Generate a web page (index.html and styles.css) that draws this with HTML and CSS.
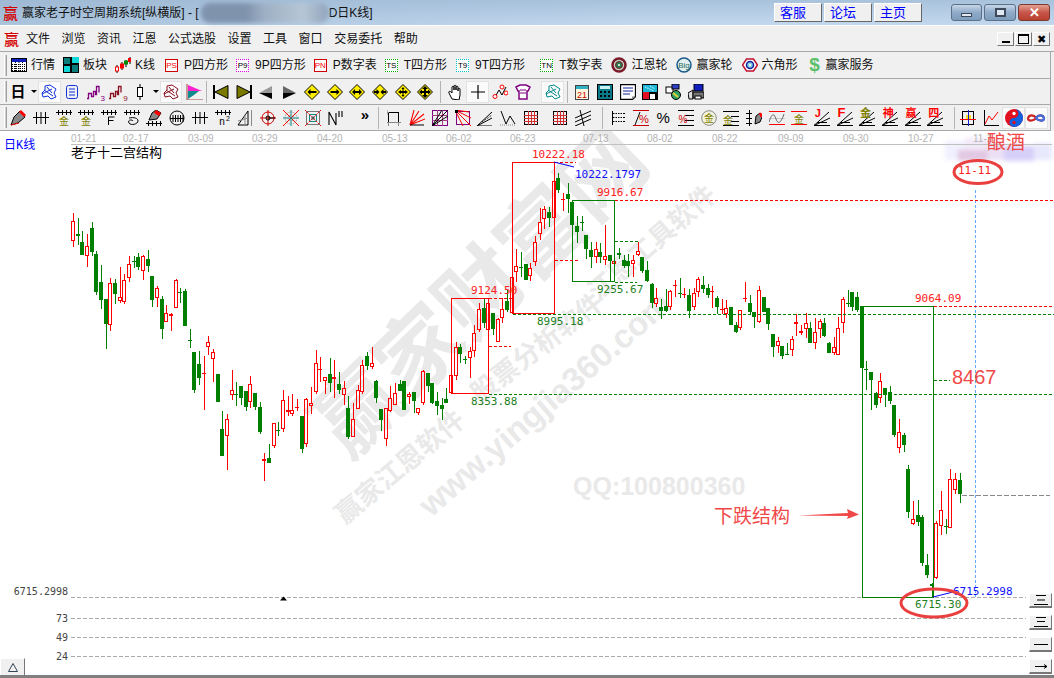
FILE: index.html
```html
<!DOCTYPE html>
<html lang="zh-CN">
<head>
<meta charset="utf-8">
<title>赢家老子时空周期系统</title>
<link rel="stylesheet" href="styles.css">
</head>
<body>
<svg class="sprite" aria-hidden="true">
  <symbol id="table" viewBox="0 0 16 16"><rect x=".5" y="1.5" width="15" height="13" fill="#fff" stroke="#000"/><rect x="1" y="2" width="14" height="3" fill="#1020c0"/><path d="M1 7.5h14M1 9.5h14M1 11.5h14M1 13.5h14M4.5 5v9M8 5v9M11.5 5v9" stroke="#000" stroke-dasharray="1 1"/></symbol>
  <symbol id="blocks" viewBox="0 0 16 16"><rect width="16" height="16" fill="#000"/><rect x="1" y="1" width="6" height="6" fill="#0a7c7c"/><rect x="9" y="0" width="7" height="6" fill="#10d8d8"/><rect x="1" y="9" width="6" height="6" fill="#10d8d8"/><rect x="9" y="8" width="6" height="7" fill="#0a7c7c"/></symbol>
  <symbol id="kline" viewBox="0 0 16 16"><path d="M2 8v8M7 5v8M11 3v7M15 0v7" stroke="#000"/><rect x="0.5" y="10" width="3" height="4" fill="#fff" stroke="red"/><rect x="5.500" y="7" width="3" height="4" fill="red" stroke="red"/><rect x="9.500" y="4" width="3" height="3" fill="#080" stroke="#080"/><rect x="13" y="1" width="3" height="4" fill="red"/></symbol>
  <symbol id="gann" viewBox="0 0 16 16"><circle cx="8" cy="8" r="6.500" fill="#c8d8c8" stroke="#7a1a2a" stroke-width="2.500"/><circle cx="8" cy="8" r="3.500" fill="#2a7a4a" stroke="#7a1a2a"/><circle cx="8" cy="8" r="1" fill="#fff"/></symbol>
  <symbol id="big" viewBox="0 0 16 16"><circle cx="8" cy="8" r="7" fill="#e4f0f0" stroke="#1a5a8a" stroke-width="1.500"/><text x="8" y="11" text-anchor="middle" class="svt" font-size="8" fill="#1a6a5a">Big</text></symbol>
  <symbol id="hex" viewBox="0 0 16 16"><path d="M4.500 2h7L15.500 8l-4 6h-7L.5 8z" fill="#fff" stroke="#c01030" stroke-width="1.500"/><circle cx="8" cy="8" r="3.500" fill="#8ad0e0" stroke="#1020a0" stroke-width="1.500"/><circle cx="8" cy="8" r="1" fill="#fff"/></symbol>
  <symbol id="scribble" viewBox="0 0 16 16"><path d="M4 2l5-1 6 4-2 4 2 4-5 2-3-3-5 1-1-4 3-3zM3 6l9 6M6 3l5 6M1 10l10-5" fill="none" stroke="currentColor"/></symbol>
  <symbol id="doc" viewBox="0 0 16 16"><rect x="2.500" y="1.500" width="11" height="13" rx="2" fill="none" stroke="#1030e0"/><path d="M5 5h6M5 8h6M5 11h6" stroke="#1030e0"/></symbol>
  <symbol id="stairs" viewBox="0 0 16 16"><path d="M0 14.500h1.500v-5h3v3h2v-5h2v3h1V2.500h2.500v6" fill="none" stroke="currentColor" stroke-width="1.300"/></symbol>
  <symbol id="candle" viewBox="0 0 16 16"><path d="M8 0v16" stroke="#000"/><rect x="5.500" y="3.500" width="5" height="9" fill="#fff" stroke="#000"/></symbol>
  <symbol id="flag" viewBox="0 0 18 16"><path d="M2 0v16h16" fill="none" stroke="#a04040"/><path d="M3 1l14 6H3z" fill="#ff20d0"/><path d="M3 7h11L9 11H3z" fill="#108a8a"/><path d="M3 11h6L3 15z" fill="#108a8a"/></symbol>
  <symbol id="first" viewBox="0 0 16 16"><rect x="0" y="1" width="2" height="14" fill="#000"/><path d="M2 8L15 1.500v13z" fill="#7a7a00" stroke="#000"/></symbol>
  <symbol id="last" viewBox="0 0 16 16"><rect x="14" y="1" width="2" height="14" fill="#000"/><path d="M14 8L1 1.500v13z" fill="#7a7a00" stroke="#000"/></symbol>
  <symbol id="prev" viewBox="0 0 16 16"><path d="M1 9l13-7v7z" fill="#999"/><path d="M1 9h13v6z" fill="#000"/></symbol>
  <symbol id="next" viewBox="0 0 16 16"><path d="M15 9L2 2v7z" fill="#666"/><path d="M15 9H2v6z" fill="#000"/></symbol>
  <symbol id="dia" viewBox="0 0 16 16"><path d="M8 .5L15.500 8 8 15.500.5 8z" fill="#ffee00" stroke="#000"/></symbol>
  <symbol id="d-l" viewBox="0 0 16 16"><use href="#dia"/><path d="M3.500 8l3-3v2h6v2h-6v2z" fill="#000"/></symbol>
  <symbol id="d-r" viewBox="0 0 16 16"><use href="#dia"/><path d="M12.500 8l-3-3v2h-6v2h6v2z" fill="#000"/></symbol>
  <symbol id="d-lr" viewBox="0 0 16 16"><use href="#dia"/><path d="M3 8l3-3v2h4V5l3 3-3 3V9H6v2z" fill="#000"/></symbol>
  <symbol id="d-in" viewBox="0 0 16 16"><use href="#dia"/><path d="M7.500 8l-3-3v2H2v2h2.500v2zM8.500 8l3-3v2H14v2h-2.500v2z" fill="#000"/></symbol>
  <symbol id="d-ud" viewBox="0 0 16 16"><use href="#dia"/><path d="M3 8l3-2v1h1.500V5H6.500L8 3l1.500 2h-1v2H10V6l3 2-3 2V9H8.500v2h1L8 13l-1.500-2h1V9H6v1z" fill="#000"/></symbol>
  <symbol id="d-uu" viewBox="0 0 16 16"><use href="#dia"/><path d="M8 2l3 3H9v2h2V5.500L14 8l-3 2.500V9H9v2h2l-3 3-3-3h2V9H5v1.500L2 8l3-2.500V7h2V5H5z" fill="#000"/></symbol>
  <symbol id="hand" viewBox="0 0 16 16"><path d="M5 15L2 9c-1-2 1-2 2-1l1 1V3c0-1 2-1 2 0v3-4c0-1 2-1 2 0v4-3c0-1 2-1 2 0v4-2c0-1 2-1 2 0v6l-1 5z" fill="#fff" stroke="#000"/></symbol>
  <symbol id="cross" viewBox="0 0 16 16"><path d="M8 1v14M1 8h14" stroke="#000" stroke-width="1.200"/></symbol>
  <symbol id="nodes" viewBox="0 0 16 16"><path d="M3 13L7 6l3 5 4-8" fill="none" stroke="#000"/><circle cx="3" cy="12.500" r="2" fill="#fff" stroke="red"/><circle cx="10" cy="3" r="2" fill="#fff" stroke="red"/><circle cx="14" cy="9" r="2" fill="#fff" stroke="red"/></symbol>
  <symbol id="shirt" viewBox="0 0 16 16"><path d="M1 3l4-2h6l4 2-2 4h-1v8H4V7H3z" fill="#fff" stroke="#800080" stroke-width="1.500"/><path d="M5 6h6M5 9h6" stroke="#800080"/></symbol>
  <symbol id="cal" viewBox="0 0 16 16"><rect x="1.500" y="1.500" width="13" height="14" fill="#fff8e0" stroke="#444"/><rect x="2" y="2" width="12" height="3" fill="#30b0c0"/><text x="8" y="14" text-anchor="middle" class="svt" font-size="9" fill="#d00000">21</text></symbol>
  <symbol id="calc" viewBox="0 0 16 16"><rect x=".5" y=".5" width="15" height="15" fill="#0a7a8a" stroke="#000"/><rect x="3" y="2" width="10" height="3" fill="#c8f0f0"/><path d="M3 7h2v2H3zM7 7h2v2H7zM11 7h2v2h-2zM3 11h2v2H3zM7 11h2v2H7zM11 11h2v2h-2z" fill="#000"/></symbol>
  <symbol id="note" viewBox="0 0 16 16"><path d="M.5.5h15v12l-3 3h-12z" fill="#fff" stroke="#000" stroke-width="1.300"/><path d="M3 4h10M3 7h10M3 10h7" stroke="#1020a0"/><path d="M12 15.500v-3h3.500z" fill="#888"/></symbol>
  <symbol id="disk" viewBox="0 0 16 16"><rect width="16" height="16" fill="#000"/><rect x="1" y="1" width="14" height="7" fill="#20b8d8"/><rect x="1" y="8" width="6" height="7" fill="#e01020"/><rect x="8" y="10" width="5" height="5" fill="#fff"/><path d="M3 3l9 4M8 2l5 3" stroke="#fff" stroke-dasharray="1 1"/></symbol>
  <symbol id="net" viewBox="0 0 16 16"><rect x="1" y="3" width="7" height="6" fill="#fff" stroke="#000"/><rect x="7" y="0" width="7" height="5" fill="#3040c0" stroke="#000"/><circle cx="11" cy="11" r="4.500" fill="#30a060" stroke="#000"/><path d="M8 9l5 4" stroke="#e0d040" stroke-width="2"/></symbol>
  <symbol id="print" viewBox="0 0 16 16"><rect x="6" y="0" width="9" height="7" fill="#1020c0" stroke="#000"/><path d="M0 9l5-3v9H1z" fill="#ddd" stroke="#000"/><rect x="5" y="8" width="11" height="6" fill="#777" stroke="#000"/><rect x="7" y="12" width="6" height="3" fill="#fff" stroke="#000"/></symbol>

  <symbol id="pen" viewBox="0 0 16 16"><path d="M1 15l3-8 6-6 5 6-7 6z" fill="#888" stroke="#000"/><path d="M9 2l2-2 5 5-2 2z" fill="red"/><path d="M1 15l8-2" stroke="red"/></symbol>
  <symbol id="comb3" viewBox="0 0 16 16"><path d="M0 7.500h16M3.500 2v12M8 2v12M12.500 2v12" stroke="#000"/></symbol>
  <symbol id="comb" viewBox="0 0 16 16"><path d="M0 2.500h16M2.500 0v5M6.500 0v5M10.500 0v5M14.500 0v5" stroke="#000"/></symbol>
  <symbol id="gold" viewBox="0 0 16 16"><use href="#comb"/><text x="8" y="15" text-anchor="middle" class="svt" font-size="10" fill="#808000">金</text></symbol>
  <symbol id="combf" viewBox="0 0 16 16"><use href="#comb"/><path d="M7.500 15V7h6M7.500 10.500h5" fill="none" stroke="#000"/></symbol>
  <symbol id="spiral" viewBox="0 0 16 16"><use href="#comb"/><path d="M5 8c5-1 9 0 9 3s-7 5-9 2 3-4 4-2" fill="none" stroke="#000"/></symbol>
  <symbol id="pencomb" viewBox="0 0 16 16"><path d="M3 10l3-7 4-3 5 3-4 6z" fill="#888" stroke="#000"/><path d="M10 0l5 3-2 3-5-3z" fill="red"/><path d="M0 13.500h16M2.500 11v5M6.500 11v5M10.500 11v5M14.500 11v5" stroke="#000"/></symbol>
  <symbol id="circomb" viewBox="0 0 16 16"><circle cx="8" cy="8" r="7" fill="none" stroke="#000"/><path d="M1 8.500h14M4 5v7M6.500 5v7M9 5v7M11.500 5v7M14 5v7" stroke="#000"/></symbol>
  <symbol id="n2" viewBox="0 0 16 16"><use href="#comb"/><text x="7" y="15" text-anchor="middle" class="svt" font-size="10" fill="#000">n</text><text x="13" y="11" text-anchor="middle" class="svt" font-size="7" fill="#000">2</text></symbol>
  <symbol id="tri" viewBox="0 0 16 16"><path d="M1 15L11 1v14z" fill="none" stroke="#000"/><path d="M8 4v12M14.500 0v16M1 11l10-3" stroke="#888"/></symbol>
  <symbol id="target" viewBox="0 0 16 16"><circle cx="8" cy="8" r="6" fill="none" stroke="#c00"/><path d="M8 0v16M0 8h16" stroke="#c00"/><path d="M8 8h7" stroke="#000"/><circle cx="8" cy="8" r="2" fill="none" stroke="#000"/></symbol>
  <symbol id="web" viewBox="0 0 16 16"><path d="M0 0l16 16M16 0L0 16" stroke="red"/><path d="M8 0v16M0 8h16" stroke="#0a8a8a"/><circle cx="8" cy="8" r="6" fill="none" stroke="#888" stroke-dasharray="1 1"/><circle cx="8" cy="8" r="3" fill="none" stroke="#888" stroke-dasharray="1 1"/></symbol>
  <symbol id="sqweb" viewBox="0 0 16 16"><rect x="1.500" y="1.500" width="13" height="13" fill="none" stroke="#777"/><rect x="4.500" y="4.500" width="7" height="7" fill="none" stroke="#0a8a8a"/><path d="M0 0l16 16M16 0L0 16" stroke="red" stroke-dasharray="2 1"/><rect x="6.500" y="6.500" width="3" height="3" fill="#555"/></symbol>
  <symbol id="nn" viewBox="0 0 16 16"><path d="M1 15V2l7 13V3M11 1v6M14 1v6" fill="none" stroke="#000" stroke-width="1.100"/></symbol>
  <symbol id="gsq" viewBox="0 0 16 16"><rect x="1.500" y="2.500" width="10" height="10" fill="none" stroke="#000"/><path d="M0 2.500h2M0 12.500h14M1.500 12v4M11.500 12v4M0 0v5" stroke="#888"/></symbol>
  <symbol id="rfan" viewBox="0 0 16 16"><path d="M1 15L5 0M1 15L10 1M1 15L15 4M1 15L16 9" stroke="red" stroke-width="1.100"/><path d="M1 15h14" stroke="#000"/></symbol>
  <symbol id="gridp" viewBox="0 0 16 16"><rect x=".5" y=".5" width="15" height="15" fill="none" stroke="#800080"/><path d="M0 5.500h16M0 10.500h16M5.500 0v16M10.500 0v16" stroke="#a04080"/><path d="M0 16L16 0M0 16L16 6M0 16L10 0" stroke="#000"/></symbol>
  <symbol id="boxfan" viewBox="0 0 16 16"><rect x="1.500" y="1.500" width="13" height="13" fill="none" stroke="#800080"/><path d="M0 0l16 16M0 0l16 8M0 0l8 16M0 0l14 2" stroke="red"/><rect x="0" y="0" width="3" height="3" fill="#000"/></symbol>
  <symbol id="kfan" viewBox="0 0 16 16"><path d="M0 16L15 2M0 16L15 8M0 16h15" stroke="#000"/><path d="M5 12L15 5" stroke="#000" stroke-dasharray="1 1"/></symbol>
  <symbol id="vv" viewBox="0 0 16 16"><path d="M1 1l5 13 4-8 5 8" fill="none" stroke="#000"/><path d="M0 15h16" stroke="#888" stroke-dasharray="1 1"/></symbol>
  <symbol id="gridr" viewBox="0 0 16 16"><rect x="1.500" y="1.500" width="13" height="13" fill="none" stroke="#000"/><path d="M1 5.500h14M1 8.500h14M1 11.500h14M5.500 1v14M8.500 1v14M11.500 1v14" stroke="#d03030"/></symbol>
  <symbol id="para" viewBox="0 0 16 16"><path d="M0 8L16 1M0 12L16 5M0 16L16 9M5 0l4 16" stroke="#000"/></symbol>
  <symbol id="elines" viewBox="0 0 16 16"><path d="M2.500 1v14M2 3.500h13M2 7.500h13M2 11.500h13" stroke="#000"/><path d="M5 1v14M7.500 1v14M10 1v14M12.500 1v14" stroke="#fff" stroke-dasharray="1 1"/></symbol>
  <symbol id="pct1" viewBox="0 0 16 16"><path d="M0 .5h16M0 15.500h16" stroke="#c00"/><path d="M2 15L7 2" stroke="#000"/><text x="11" y="13" text-anchor="middle" class="svt" font-size="11" fill="#c00">%</text></symbol>
  <symbol id="pct3" viewBox="0 0 16 16"><path d="M0 .5h16M7 5.500h9M7 10.500h9M0 15.500h16" stroke="#000"/><text x="5" y="13" text-anchor="middle" class="svt" font-size="10" fill="#c00">%</text></symbol>
  <symbol id="goldc" viewBox="0 0 16 16"><circle cx="8" cy="8" r="7.300" fill="#f4f4dc" stroke="#888"/><text x="8" y="12" text-anchor="middle" class="svt" font-size="10" fill="#808000">金</text></symbol>
  <symbol id="goldl" viewBox="0 0 16 16"><path d="M0 1.500h16M8 6.500h8M8 11.500h8M0 15.500h16" stroke="#000"/><text x="5" y="14" text-anchor="middle" class="svt" font-size="10" fill="#808000">金</text></symbol>
  <symbol id="penl" viewBox="0 0 16 16"><path d="M9 14l1-8 4-3 2 4-2 5z" fill="#888" stroke="#000"/><path d="M14 3l2 4" stroke="red" stroke-width="2.500"/><path d="M3.500 0v16M0 3.500h6M0 8.500h6M0 13.500h6" stroke="#000"/></symbol>
  <symbol id="sine" viewBox="0 0 16 16"><path d="M0 1.500h16M0 14.500h16" stroke="red"/><path d="M0 8.500h16" stroke="#ccc"/><path d="M0 12c3-9 5-9 7-3s5 4 8-5" fill="none" stroke="#666"/></symbol>
  <symbol id="goldr" viewBox="0 0 16 16"><path d="M0 1.500h16M0 14.500h16" stroke="red"/><text x="8" y="12.500" text-anchor="middle" class="svt" font-size="10" fill="#808000">金</text></symbol>
  <symbol id="fan" viewBox="0 0 16 16"><path d="M0 15.500L15 2M0 15.500L16 8M0 15.500h16" stroke="#000"/><path d="M3 12.500h10" stroke="#000"/></symbol>
  <symbol id="gridy" viewBox="0 0 16 16"><rect x="2.500" y="1.500" width="11" height="13" fill="none" stroke="#000"/><rect x="6" y="5" width="5" height="5" fill="#ffe020"/><path d="M0 9.500h16" stroke="red"/><path d="M8.500 0v16" stroke="#1020d0"/></symbol>
  <symbol id="chart2" viewBox="0 0 16 16"><path d="M1.500 0v15.500H16" fill="none" stroke="#000"/><path d="M2 14l4-8 3 4 6-8" fill="none" stroke="red"/></symbol>
  <symbol id="yin" viewBox="0 0 16 16"><circle cx="8" cy="8" r="8" fill="#e01020"/><path d="M8 0a8 8 0 0 1 0 16 4 4 0 0 1 0-8 4 4 0 0 0 0-8z" fill="#1060e0"/><circle cx="8" cy="4" r="1.500" fill="#fff"/><circle cx="8" cy="12" r="1.500" fill="#e01020"/></symbol>
  <symbol id="inf" viewBox="0 0 16 16"><path d="M8 8c-2-3-6-3-7 0s5 3 7 0 6-3 7 0-5 3-7 0z" fill="none" stroke="#d02020" stroke-width="2"/><path d="M8 8c2-3 6-3 7 0s-5 3-7 0z" fill="none" stroke="#4070e0" stroke-width="2"/></symbol>
</svg>

<div class="app">
  <header class="title">
    <span class="logo">赢</span>
    <span class="title-text">赢家老子时空周期系统[纵横版] - [</span>
    <span class="blur"></span>
    <span class="title-text">D日K线]</span>
    <span class="spring"></span>
    <a class="link">客服</a><a class="link">论坛</a><a class="link">主页</a>
    <span class="win-btns">
      <span class="win w-first"><i class="g-min"></i></span>
      <span class="win"><i class="g-max"></i></span>
      <span class="win close">✕</span>
    </span>
  </header>

  <nav class="menu">
    <span class="logo small">赢</span>
    <span class="m w1">文件</span><span class="m">浏览</span><span class="m">资讯</span><span class="m">江恩</span><span class="m">公式选股</span><span class="m">设置</span><span class="m">工具</span><span class="m">窗口</span><span class="m">交易委托</span><span class="m">帮助</span>
    <span class="spring"></span>
    <span class="mdi"><i class="d-min"></i></span>
    <span class="mdi"><i class="d-res"></i></span>
    <span class="mdi x">✖</span>
  </nav>

  <div class="bar bar1">
    <span class="grip"></span>
    <span class="t g0"><svg class="i"><use href="#table"/></svg>行情</span>
    <span class="t g8"><svg class="i"><use href="#blocks"/></svg>板块</span>
    <span class="t g8"><svg class="i"><use href="#kline"/></svg>K线</span>
    <span class="t g10"><span class="tag red">PS</span>P四方形</span>
    <span class="t g8"><span class="tag mag">P9</span>9P四方形</span>
    <span class="t g8"><span class="tag red">PN</span>P数字表</span>
    <span class="t g8"><span class="tag grn">TS</span>T四方形</span>
    <span class="t g9"><span class="tag cyn">T9</span>9T四方形</span>
    <span class="t g15"><span class="tag grn">TN</span>T数字表</span>
    <span class="t g9"><svg class="i"><use href="#gann"/></svg>江恩轮</span>
    <span class="t g9"><svg class="i"><use href="#big"/></svg>赢家轮</span>
    <span class="t g9"><svg class="i"><use href="#hex"/></svg>六角形</span>
    <span class="t g10"><span class="dollar">$</span>赢家服务</span>
  </div>

  <div class="bar bar2">
    <span class="grip"></span>
    <span class="b drop"><b class="ri">日</b><i class="arr"></i></span>
    <span class="b on blue"><svg class="i"><use href="#scribble"/></svg></span>
    <span class="b"><svg class="i"><use href="#doc"/></svg></span>
    <span class="b pur"><svg class="i"><use href="#stairs"/></svg><small>3</small></span>
    <span class="b drd"><svg class="i"><use href="#stairs"/></svg><small>9</small></span>
    <span class="b drop"><svg class="i"><use href="#candle"/></svg><i class="arr"></i></span>
    <span class="b on drd"><svg class="i"><use href="#scribble"/></svg></span>
    <span class="b"><svg class="i wide"><use href="#flag"/></svg></span>
    <span class="sep"></span>
    <span class="b"><svg class="i"><use href="#first"/></svg></span>
    <span class="b"><svg class="i"><use href="#last"/></svg></span>
    <span class="b"><svg class="i"><use href="#prev"/></svg></span>
    <span class="b"><svg class="i"><use href="#next"/></svg></span>
    <span class="b"><svg class="i"><use href="#d-l"/></svg></span>
    <span class="b"><svg class="i"><use href="#d-r"/></svg></span>
    <span class="b"><svg class="i"><use href="#d-lr"/></svg></span>
    <span class="b"><svg class="i"><use href="#d-in"/></svg></span>
    <span class="b"><svg class="i"><use href="#d-ud"/></svg></span>
    <span class="b"><svg class="i"><use href="#d-uu"/></svg></span>
    <span class="sep s7"></span>
    <span class="b"><svg class="i"><use href="#hand"/></svg></span>
    <span class="b on"><svg class="i"><use href="#cross"/></svg></span>
    <span class="b"><svg class="i"><use href="#nodes"/></svg></span>
    <span class="b"><svg class="i"><use href="#shirt"/></svg></span>
    <span class="b on teal sp7"><svg class="i"><use href="#scribble"/></svg></span>
    <span class="sep s7"></span>
    <span class="b"><svg class="i"><use href="#cal"/></svg></span>
    <span class="b"><svg class="i"><use href="#calc"/></svg></span>
    <span class="b"><svg class="i"><use href="#note"/></svg></span>
    <span class="b"><svg class="i"><use href="#disk"/></svg></span>
    <span class="b"><svg class="i"><use href="#net"/></svg></span>
    <span class="b"><svg class="i"><use href="#print"/></svg></span>
  </div>

  <div class="bar bar3">
    <span class="grip"></span>
    <span class="b"><svg class="i"><use href="#pen"/></svg></span>
    <span class="b"><svg class="i"><use href="#comb3"/></svg></span>
    <span class="b"><svg class="i"><use href="#gold"/></svg></span>
    <span class="b"><svg class="i"><use href="#gold"/></svg></span>
    <span class="b"><svg class="i"><use href="#combf"/></svg></span>
    <span class="b"><svg class="i"><use href="#spiral"/></svg></span>
    <span class="b"><svg class="i"><use href="#pencomb"/></svg></span>
    <span class="b"><svg class="i"><use href="#circomb"/></svg></span>
    <span class="b"><svg class="i"><use href="#comb3"/></svg></span>
    <span class="b"><svg class="i"><use href="#n2"/></svg></span>
    <span class="b"><svg class="i"><use href="#tri"/></svg></span>
    <span class="b"><svg class="i"><use href="#target"/></svg></span>
    <span class="b"><svg class="i"><use href="#web"/></svg></span>
    <span class="b"><svg class="i"><use href="#sqweb"/></svg></span>
    <span class="b"><svg class="i"><use href="#nn"/></svg></span>
    <span class="more">»</span>
    <span class="sep s6"></span>
    <span class="b"><svg class="i"><use href="#gsq"/></svg></span>
    <span class="b"><svg class="i"><use href="#rfan"/></svg></span>
    <span class="b"><svg class="i"><use href="#gridp"/></svg></span>
    <span class="b"><svg class="i"><use href="#boxfan"/></svg></span>
    <span class="b"><svg class="i"><use href="#kfan"/></svg></span>
    <span class="b"><svg class="i"><use href="#vv"/></svg></span>
    <span class="b"><svg class="i"><use href="#gridr"/></svg></span>
    <span class="b sp7"><svg class="i"><use href="#gridr"/></svg></span>
    <span class="b"><svg class="i"><use href="#para"/></svg></span>
    <span class="sep s10"></span>
    <span class="b"><svg class="i"><use href="#elines"/></svg></span>
    <span class="b"><svg class="i"><use href="#pct1"/></svg></span>
    <span class="b pct">%</span>
    <span class="b"><svg class="i"><use href="#pct3"/></svg></span>
    <span class="b"><svg class="i"><use href="#goldc"/></svg></span>
    <span class="b"><svg class="i"><use href="#goldl"/></svg></span>
    <span class="b"><svg class="i"><use href="#penl"/></svg></span>
    <span class="b"><svg class="i"><use href="#sine"/></svg></span>
    <span class="b"><svg class="i"><use href="#goldr"/></svg></span>
    <span class="b fan"><svg class="i"><use href="#fan"/></svg><em class="red">J</em></span>
    <span class="b fan"><svg class="i"><use href="#fan"/></svg><em class="red big">F</em></span>
    <span class="b fan"><svg class="i"><use href="#fan"/></svg><em class="olive">金</em></span>
    <span class="b fan"><svg class="i"><use href="#fan"/></svg><em class="red">神</em></span>
    <span class="b fan"><svg class="i"><use href="#fan"/></svg><em class="red">赢</em></span>
    <span class="b fan"><svg class="i"><use href="#fan"/></svg><em class="red">四</em></span>
    <span class="sep s8"></span>
    <span class="b"><svg class="i"><use href="#gridy"/></svg></span>
    <span class="b"><svg class="i"><use href="#chart2"/></svg></span>
    <span class="b on"><svg class="i lg"><use href="#yin"/></svg></span>
    <span class="b on"><svg class="i lg"><use href="#inf"/></svg></span>
  </div>

  <main class="chart">
    <svg class="plot" viewBox="0 131 1054 544" width="1054" height="544">
      <g class="wm">
        <text class="wm-big" transform="translate(348 461) rotate(-44)">赢家财富网</text>
        <text class="wm-sm" transform="translate(345 525) rotate(-40)">赢家江恩软件</text>
        <text class="wm-web" transform="translate(431 518) rotate(-41)">www.yingjia360.com</text>
        <text class="wm-sm" transform="translate(480 404) rotate(-38)">股票分析软件</text>
        <text class="wm-sm" transform="translate(598 302) rotate(-41)">江恩工具软件</text>
        <text class="wm-qq" x="573" y="495">QQ:100800360</text>
      </g>

      <g class="mosaic">
        <rect x="945" y="141" width="20" height="19" fill="#f0f0ff"/>
        <rect x="958" y="150" width="30" height="11" fill="#e2c8e2"/>
        <rect x="965" y="138" width="24" height="12" fill="#f2eaf8"/>
        <rect x="988" y="142" width="16" height="18" fill="#ebe0f5"/>
        <rect x="1004" y="146" width="30" height="15" fill="#d6d0f8"/>
        <rect x="1034" y="143" width="18" height="17" fill="#e8e8fc"/>
      </g>

      <g class="dates">
        <text x="71" y="142">01-21</text><text x="123" y="142">02-17</text><text x="188" y="142">03-09</text><text x="252" y="142">03-29</text><text x="317" y="142">04-20</text><text x="382" y="142">05-13</text><text x="446" y="142">06-02</text><text x="510" y="142">06-23</text><text x="583" y="142">07-13</text><text x="647" y="142">08-02</text><text x="712" y="142">08-22</text><text x="778" y="142">09-09</text><text x="843" y="142">09-30</text><text x="908" y="142">10-27</text><text x="973" y="142">11-1</text>
      </g>
      <path class="axis" d="M71 144.500H1052"/>
      <text class="kname" x="4" y="149">日K线</text>
      <text class="struct" x="71" y="157">老子十二宫结构</text>

      <g class="gridlines">
        <path d="M71 597.500H1026M71 618.500H1026M71 637.500H1026M71 656.500H1026"/>
      </g>
      <g class="ylab">
        <text x="68" y="595">6715.2998</text><text x="68" y="622">73</text><text x="68" y="641">49</text><text x="68" y="660">24</text>
      </g>
      <path class="mark" d="M280 600.500l3.500-4 3.500 4z"/>

      <path class="vline" d="M975.500 190V597"/>
      <path class="grayd" d="M962 495.500H1050"/>

      <g id="candles"></g>

      <g class="ann-r">
        <rect x="451.500" y="298.500" width="37" height="95"/>
        <rect x="512.500" y="162.500" width="42" height="151"/>
      </g>
      <g class="ann-g">
        <rect x="572.500" y="200.500" width="42" height="81"/>
        <rect x="862.500" y="306.500" width="71" height="291"/>
      </g>
      <path class="dash-r" d="M489 298.500H512M489 346.500H511M555 260.500H579M555 162.500H576M615 200.500H1054M934 306.500H1054"/>
      <path class="dash-g" d="M489 394.500H1054M513 314.500H1054M615 241.500H640M615 282.500H637M934 380.500H950"/>
      <path class="blue" d="M554 162l20 5M933 597l20-5"/>

      <g class="lab">
        <text class="r" x="471" y="294">9124.50</text>
        <text class="g" x="471" y="405">8353.88</text>
        <text class="r" x="532" y="158">10222.18</text>
        <text class="b1" x="575" y="178">10222.1797</text>
        <text class="r" x="597" y="196">9916.67</text>
        <text class="g" x="537" y="325">8995.18</text>
        <text class="g" x="597" y="293">9255.67</text>
        <text class="r" x="915" y="302">9064.09</text>
        <text class="g" x="915" y="608">6715.30</text>
        <text class="b1" x="953" y="595">6715.2998</text>
        <text class="r" x="958" y="174">11-11</text>
      </g>
      <text class="big-r num" x="952" y="384">8467</text>
      <text class="big-r" x="987" y="149">酿酒</text>
      <text class="big-r fall" x="714" y="523">下跌结构</text>
      <path class="arrow" d="M798 515.500L848 513l-1-4 12 5.500-12 4.500 1-3z"/>
      <ellipse class="ring" cx="978" cy="172" rx="24" ry="11.500"/>
      <ellipse class="ring" cx="934" cy="603" rx="33" ry="14"/>
    </svg>

    <div class="side">
      <span class="sb"><svg class="gl" viewBox="0 0 16 10"><path d="M3 .5h10M4 5h8M1 9.500h14"/></svg></span>
      <span class="sb"><svg class="gl" viewBox="0 0 16 10"><path d="M3 .5h10M4 4.500h8M1 9.500h14"/></svg></span>
      <span class="sb"><svg class="gl" viewBox="0 0 16 10"><path d="M1 5.500h14"/></svg></span>
      <span class="sb"><svg class="gl" viewBox="0 0 16 10"><path d="M2 5.500h12M11 3.500l3 2-3 2"/></svg></span>
    </div>
    <span class="toggle"><svg class="tri" viewBox="0 0 10 9"><path d="M5 .5L9.500 8.500H.5z"/></svg></span>
  </main>
  <div class="status"></div>
</div>
<script src="chart.js"></script>
</body>
</html>
```

FILE: styles.css
```css
* { box-sizing: border-box; }
html, body { margin: 0; padding: 0; }
body {
  width: 1054px;
  height: 678px;
  overflow: hidden;
  background: #f0f0f0;
  font-family: "Liberation Sans", "Noto Sans CJK SC", sans-serif;
  font-size: 12px;
  line-height: 16px;
  color: #000;
}
.sprite { display: none; }
.svt { font-family: "Liberation Sans", "Noto Sans CJK SC", sans-serif; }
.app { display: flex; flex-direction: column; height: 678px; }
.spring { flex: 1; }

/* title bar */
.title {
  height: 25px;
  display: flex;
  align-items: center;
  padding: 0 4px 0 3px;
  background: linear-gradient(90deg, rgba(150,178,205,.55), rgba(185,209,234,0) 60%), linear-gradient(#a9c2dc, #c2d8ee);
  flex: none;
}
.logo {
  width: 16px;
  font: 500 15px/16px "Noto Sans CJK SC", sans-serif;
  color: #d40000;
}
.logo.small { margin-left: 1px; width: 16px; }
.title-text { margin-left: 3px; color: #111; white-space: nowrap; }
.title-text + .blur { margin-left: 2px; }
.blur {
  width: 128px;
  height: 20px;
  border-radius: 9px;
  background: linear-gradient(90deg, #7f93ad 0 35%, #9eb0c4 50%, #b6c6d6 80%, #8fa3bb);
  filter: blur(2px);
}
.blur + .title-text { margin-left: 0; }
.link {
  width: 48px;
  height: 19px;
  margin-left: 2px;
  padding-left: 5px;
  background: #f0f0f0;
  border: 1px solid;
  border-color: #fff #666 #666 #fff;
  color: #0000ff;
  font-size: 13px;
  line-height: 17px;
}
.win-btns { display: flex; gap: 2px; margin-left: 29px; }
.win {
  width: 32px;
  height: 17px;
  display: flex;
  align-items: center;
  justify-content: center;
  border: 1px solid #5c7088;
  border-radius: 3px;
  background: linear-gradient(#c6d6e8, #8faac8 50%, #7e9cbc);
}
.win.w-first { width: 31px; }
.win.close {
  background: linear-gradient(#e4a090, #c8564a 50%, #b8402f);
  border-color: #7a3a30;
  color: #fff;
  font-size: 13px;
  font-weight: 700;
}
.g-min { width: 11px; height: 4px; background: #dfe8f2; border: 1px solid #3c4a5c; margin-top: 4px; }
.g-max { width: 11px; height: 9px; border: 2px solid #3c4a5c; background: #dfe8f2; }

/* menu */
.menu {
  height: 27px;
  flex: none;
  display: flex;
  align-items: center;
  padding: 0 4px 0 3px;
  background: #f0f0f0;
  border-top: 1px solid #fff;
  border-bottom: 1px solid #a8a8a8;
}
.m { margin-right: 11.500px; white-space: nowrap; color: #111; }
.w1 { margin-left: 6px; }
.mdi {
  width: 17px;
  height: 14px;
  display: flex;
  align-items: center;
  justify-content: center;
  border-right: 1px solid #777;
  border-bottom: 1px solid #777;
  border-top: 1px solid #fff;
  border-left: 1px solid #fff;
}
.mdi + .mdi { margin-left: 1px; }
.mdi.x { font-size: 11px; line-height: 12px; }
.d-min { width: 8px; height: 2px; background: #000; margin-top: 7px; }
.d-res { width: 11px; height: 10px; border: 1px solid #000; border-top-width: 2px; }

/* toolbars */
.bar {
  display: flex;
  align-items: center;
  flex: none;
  background: #f0f0f0;
  border-bottom: 1px solid #a8a8a8;
  border-right: 1px solid #a8a8a8;
  margin-right: 3px;
  padding-left: 4px;
  overflow: hidden;
}
.bar1 { height: 27px; }
.bar2, .bar3 { height: 26px; }
.grip {
  flex: none;
  width: 3px;
  height: 21px;
  border-left: 1px solid #fff;
  border-right: 1px solid #a0a0a0;
  background: #d0d0d0;
}
.t {
  display: flex;
  align-items: center;
  gap: 4px;
  white-space: nowrap;
  color: #111;
  flex: none;
}
.g0 { margin-left: 4px; }
.g8 { margin-left: 8px; }
.g9 { margin-left: 9px; }
.g10 { margin-left: 10px; }
.g15 { margin-left: 15px; }
.i { width: 16px; height: 16px; flex: none; display: block; overflow: visible; }
.i.wide { width: 18px; }
.i.lg { width: 18px; height: 18px; }
.tag {
  width: 13px;
  height: 13px;
  display: flex;
  align-items: center;
  justify-content: center;
  border: 1px dotted;
  background: #fff;
  font-size: 8px;
  line-height: 11px;
  color: #000;
  margin-right: 2px;
}
.tag.red { border: 1px solid #d00000; }
.tag.mag { border-color: #e000e0; }
.tag.grn { border-color: #00b000; }
.tag.cyn { border-color: #00c8c8; }
.dollar {
  width: 14px;
  text-align: center;
  font-size: 19px;
  font-weight: 700;
  color: #5cbf6a;
}
.b {
  position: relative;
  flex: none;
  width: 22.700px;
  height: 22px;
  display: flex;
  align-items: center;
  justify-content: center;
  color: #000;
}
.b.on { background: #fbfbfb; border: 1px solid #e2e2e2; }
.blue { color: #1030e0; }
.pur { color: #800080; }
.drd { color: #8a1020; }
.teal { color: #008a8a; }
.b small { position: absolute; right: 1px; bottom: 0; font-size: 8px; line-height: 9px; }
.drop { width: 31px; justify-content: flex-start; padding-left: 3px; gap: 3px; }
.ri { font-size: 15px; width: 16px; text-align: center; }
.arr { width: 0; height: 0; border: 3px solid transparent; border-top: 3px solid #000; border-bottom: 0; margin-left: 2px; }
.sep { flex: none; width: 4.600px; height: 22px; background: linear-gradient(90deg, transparent 1px, #b4b4b4 1px, #b4b4b4 2px, transparent 2px); }
.s6 { width: 6px; margin-left: 1px; }
.s7 { width: 7px; background-position: 2px 0; background-repeat: no-repeat; }
.s8 { width: 9px; margin-left: 1px; background-position: 5px 0; background-repeat: no-repeat; }
.s10 { width: 12px; background-position: 6px 0; background-repeat: no-repeat; }
.sp7 { margin-left: 7px; }
.more { flex: none; width: 29px; padding-left: 6px; text-align: center; font-size: 15px; font-weight: 700; margin-top: -6px; }
.pct { font-size: 15px; }
.fan em { position: absolute; left: 4px; top: 0; font-style: normal; font-size: 11px; line-height: 12px; font-weight: 700; }
.red { color: #ff0000; }
.olive { color: #808000; }
.fan em.big { font-size: 13px; }

/* chart */
.chart { position: relative; flex: 1; background: #fff; min-height: 0; }
.plot { display: block; }
.wm text { fill: #e9e9e9; }
.wm-big { font: 700 85px "Noto Sans CJK SC", sans-serif; }
.wm-sm { font: 700 26.500px "Noto Sans CJK SC", sans-serif; }
.wm-web { font: 700 33px "Liberation Sans", sans-serif; }
.wm-qq { font: 700 25px "Liberation Sans", sans-serif; }
.mosaic { filter: blur(2px); }
.dates text { font: 10px "Liberation Sans", sans-serif; fill: #b4b4b4; }
.axis { stroke: #c0c0c0; fill: none; }
.kname { font: 12px "Liberation Mono", "Noto Sans CJK SC", monospace; fill: #0000ff; }
.struct { font: 13px "Noto Sans CJK SC", sans-serif; fill: #000; }
.gridlines path { stroke: #aaa; stroke-dasharray: 4 2; fill: none; }
.ylab text { font: 10px "DejaVu Sans Mono", monospace; fill: #444; text-anchor: end; }
.mark { fill: #000; }
.vline { stroke: #66aaff; stroke-dasharray: 3 2; fill: none; }
.grayd { stroke: #888; stroke-dasharray: 5 2; fill: none; }
.up { fill: none; stroke: #ff0000; stroke-width: 1; shape-rendering: crispEdges; }
.up-w { fill: #ff0000; shape-rendering: crispEdges; }
.dn { fill: #007f00; shape-rendering: crispEdges; }
.ann-r rect { fill: none; stroke: #ff0000; }
.ann-g rect { fill: none; stroke: #007f00; }
.dash-r { stroke: #ff0000; stroke-dasharray: 3 2; fill: none; }
.dash-g { stroke: #007f00; stroke-dasharray: 3 2; fill: none; }
path.blue { stroke: #0000ff; fill: none; }
.lab text { font: 11px "DejaVu Sans Mono", monospace; }
.lab .r { fill: #ff2020; }
.lab .g { fill: #1f7f1f; }
.lab .b1 { fill: #1010ff; }
.big-r { font: 19px "Noto Sans CJK SC", sans-serif; fill: #f04848; }
.big-r.num { font: 20px "Liberation Sans", sans-serif; }
.big-r.fall { font-size: 19px; }
.arrow { fill: #f04848; }
.ring { fill: none; stroke: #ea3f3f; stroke-width: 3; }

.side {
  position: absolute;
  right: 2px;
  top: 462px;
  display: flex;
  flex-direction: column;
  gap: 7px;
}
.sb {
  width: 23px;
  height: 15px;
  display: flex;
  align-items: center;
  justify-content: center;
  background: #f0f0f0;
  border-right: 1px solid #777;
  border-bottom: 2px solid #777;
  border-top: 1px solid #fff;
  border-left: 1px solid #fff;
}
.gl { width: 16px; height: 10px; }
.gl path { stroke: #000; fill: none; }
.toggle {
  position: absolute;
  left: 1px;
  bottom: 0;
  width: 24px;
  height: 17px;
  display: flex;
  align-items: center;
  justify-content: center;
  background: #f0f0f0;
  border-top: 1px solid #fff;
  border-right: 1px solid #777;
}
.tri { width: 10px; height: 9px; }
.tri path { fill: none; stroke: #345; }
.status { flex: none; height: 3px; background: #808080; }
```

FILE: chart.js
```js
// [x, high, low, bodyTop, bodyBottom]
var UP = [
[73,213,247,221,241],[87,234,267,246,256],[110,278,331,283,325],[120,267,303,297,301],[124,274,304,280,302],[129,256,282,264,278],[143,255,280,256,271],[157,286,307,288,298],[166,305,322,313,322],[171,313,331,314,316],[176,279,308,280,308],[204,356,410,373,374],[208,336,355,342,347],[213,349,382,352,359],[227,414,470,419,436],[232,370,400,390,395],[250,376,408,384,402],[264,453,481,459,461],[274,423,448,423,446],[283,390,432,400,429],[288,396,416,410,412],[292,394,416,410,414],[297,399,411,407,408],[306,398,447,399,444],[311,387,414,403,406],[316,350,394,363,392],[320,357,382,369,370],[325,377,394,377,381],[334,360,398,377,379],[344,381,405,388,395],[353,403,437,419,437],[358,385,409,390,409],[362,360,394,365,392],[372,347,369,363,367],[386,408,446,408,439],[390,386,412,398,411],[395,383,405,393,405],[409,392,404,394,397],[418,408,415,408,413],[423,370,405,371,403],
[451,375,393,375,393],[456,342,380,347,376],[470,347,378,351,358],[474,325,357,333,351],[479,303,332,309,330],[488,299,345,303,330],[498,318,342,319,342],[502,298,323,309,318],[512,265,313,277,313],[516,249,282,266,272],[530,263,281,268,276],[535,236,266,242,262],[540,208,240,222,234],[544,206,229,209,219],[554,181,218,181,218],[563,193,211,199,200],[596,242,263,249,257],[605,225,265,256,260],[614,250,273,261,264],[633,255,277,260,264],[638,242,256,251,255],
[656,288,307,298,304],[670,290,310,291,307],[675,280,297,285,286],[684,288,298,294,295],[694,288,310,293,307],[698,277,297,279,292],[712,286,308,291,292],[722,299,314,309,310],[726,300,318,308,314],[740,310,330,310,328],[745,282,302,298,299],[759,286,323,290,322],[778,337,353,341,346],[792,336,356,339,350],[796,314,336,322,324],[801,325,335,331,333],[806,313,338,323,329],[815,318,349,332,343],[820,319,338,321,329],[834,337,355,347,353],[838,317,355,328,355],[843,297,333,299,323],
[880,373,403,381,398],[899,419,453,432,448],[913,501,525,519,524],[936,521,579,523,578],[941,491,535,510,526],[950,469,528,479,528],[955,473,494,479,490]
];
var DOWN = [
[78,218,245,234,236],[82,231,255,242,255],[92,222,256,228,252],[96,251,295,254,292],[101,265,309,282,300],[106,299,349,299,324],[115,279,304,283,294],[134,256,268,261,262],[138,253,270,257,267],[148,250,272,259,266],[152,276,307,276,300],[162,296,339,299,329],[180,288,303,292,293],[185,289,326,291,326],[190,329,348,340,341],[194,352,393,352,390],[199,351,385,364,378],[218,374,402,374,402],[222,411,456,429,456],[236,382,406,394,395],[241,386,405,386,398],[246,391,411,391,407],[255,393,410,393,407],[260,402,434,407,432],[269,444,463,458,463],[278,422,436,430,431],[302,416,453,416,449],[330,358,392,374,383],[339,372,394,384,390],[348,396,439,408,437],[367,352,370,356,366],[376,380,403,381,398],[381,409,431,409,420],[400,380,391,384,391],[404,381,410,381,410],[414,392,413,392,401],[428,373,392,373,386],[432,383,404,383,403],[437,392,415,401,406],[442,398,420,405,409],[446,388,403,399,403],
[460,344,363,347,354],[465,356,364,359,360],[484,299,328,308,323],[493,313,335,313,329],[507,290,312,301,310],[521,252,277,267,268],[526,264,280,264,280],[549,207,227,212,218],[558,173,193,178,190],[568,183,213,194,199],[572,200,225,202,225],[577,216,243,226,232],[582,216,231,222,223],[586,235,259,235,249],[591,242,268,250,257],[600,243,263,252,257],[610,255,282,255,261],[619,248,259,253,255],[624,255,268,260,266],[628,254,277,261,266],[642,257,273,257,271],[647,261,282,270,281],
[652,283,308,284,303],[661,299,319,307,311],[666,289,312,306,311],[680,278,298,293,294],[689,289,318,295,311],[703,276,293,285,289],[708,284,298,288,295],[717,296,314,298,307],[731,307,325,307,325],[736,322,333,325,332],[750,295,315,303,312],[754,312,328,312,317],[764,297,312,297,312],[768,308,330,308,324],[773,334,357,334,347],[782,346,359,346,356],[787,343,355,354,355],[810,322,343,328,343],[824,318,337,323,336],[829,342,353,343,353],[848,290,307,303,304],[852,292,311,292,307],[857,292,312,297,310],
[862,306,373,306,368],[866,361,390,369,370],[871,372,410,372,380],[876,392,408,393,405],[885,388,407,388,395],[890,386,404,392,401],[894,405,437,405,435],[904,433,452,435,445],[908,465,518,469,512],[918,500,526,515,522],[922,515,566,517,563],[927,554,578,565,575],[932,583,597,584,586],[946,519,534,526,527],[960,473,503,480,494]
];

var NS = "http://www.w3.org/2000/svg";
var host = document.getElementById("candles");

function rect(cls, x, y, w, h) {
  var r = document.createElementNS(NS, "rect");
  r.setAttribute("class", cls);
  r.setAttribute("x", x);
  r.setAttribute("y", y);
  r.setAttribute("width", w);
  r.setAttribute("height", Math.max(h, 0));
  host.appendChild(r);
}

DOWN.forEach(function (c) {
  rect("dn", c[0], c[1], 1, c[2] - c[1]);
  rect("dn", c[0] - 2, c[3], 4, Math.max(c[4] - c[3], 1));
});

UP.forEach(function (c) {
  var flat = c[4] - c[3] <= 1;
  if (flat) {
    rect("up-w", c[0], c[1], 1, c[2] - c[1]);
    rect("up-w", c[0] - 2, c[3], 4, 1);
    return;
  }
  rect("up-w", c[0], c[1], 1, c[3] - c[1]);
  rect("up-w", c[0], c[4], 1, c[2] - c[4]);
  rect("up", c[0] - 1.5, c[3] + 0.5, 3, c[4] - c[3] - 1);
});
```
